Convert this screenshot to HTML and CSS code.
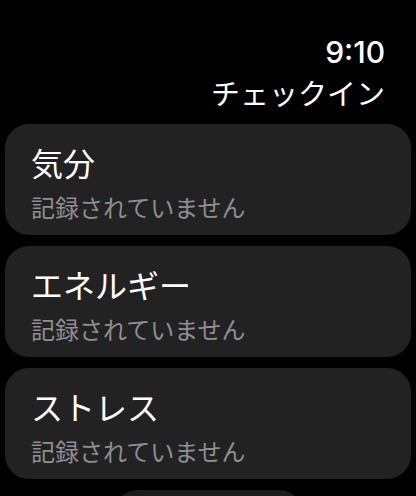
FILE: index.html
```html
<!DOCTYPE html>
<html lang="ja">
<head>
  <meta charset="UTF-8">
  <meta name="viewport" content="width=device-width, initial-scale=1.0">
  <title>チェックイン</title>
  <link rel="stylesheet" href="styles.css">
</head>
<body>

  <header class="top">
    <div class="clock">9:10</div>
    <h1 class="page-title">チェックイン</h1>
  </header>

  <main class="list">
    <div class="card">
      <div class="card-title">気分</div>
      <div class="card-sub">記録されていません</div>
    </div>

    <div class="card">
      <div class="card-title">エネルギー</div>
      <div class="card-sub">記録されていません</div>
    </div>

    <div class="card">
      <div class="card-title">ストレス</div>
      <div class="card-sub">記録されていません</div>
    </div>

    <div class="done-btn"></div>
  </main>

</body>
</html>
```

FILE: styles.css
```css
* {
  box-sizing: border-box;
}

body {
  margin: 0;
  height: 100vh;
  background: #000;
  color: #fff;
  font-family: "Noto Sans CJK JP", "Noto Sans", sans-serif;
  overflow: hidden;
}

.top {
  display: flex;
  flex-direction: column;
  align-items: flex-end;
  padding: 35px 31px 0 0;
}

.clock {
  font-family: Inter, "Noto Sans", sans-serif;
  font-size: 30px;
  font-weight: 500;
  line-height: 34px;
}

.page-title {
  margin: 3px 0 0;
  font-size: 29px;
  font-weight: 400;
  line-height: 40px;
}

.list {
  display: flex;
  flex-direction: column;
  gap: 11px;
  padding: 12px 5px 0;
}

.card {
  background: #222222;
  border-radius: 24px;
  height: 111px;
  padding: 18px 26px 0;
  display: flex;
  flex-direction: column;
}

.card-title {
  font-size: 32px;
  line-height: 40px;
}

.card-sub {
  margin-top: 10px;
  font-size: 24px;
  line-height: 30px;
  color: #8e8e93;
}

.done-btn {
  flex-shrink: 0;
  align-self: center;
  width: 191px;
  height: 50px;
  border-radius: 25px;
  background: #1c1c1c;
}
```
